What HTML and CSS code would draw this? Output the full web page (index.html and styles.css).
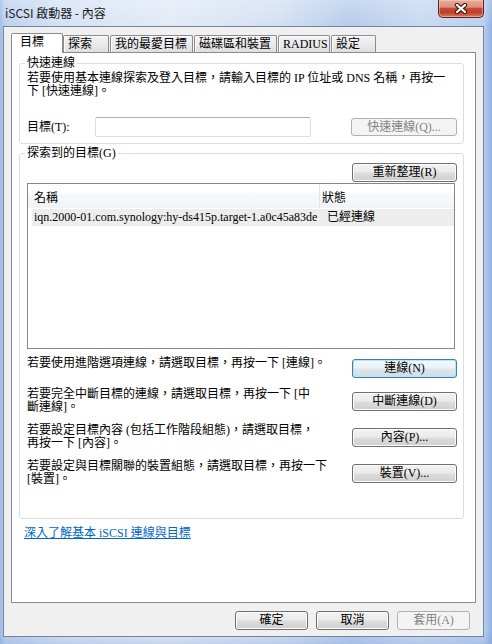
FILE: index.html
```html
<!DOCTYPE html>
<html lang="zh-Hant">
<head>
<meta charset="utf-8">
<title>iSCSI 啟動器 - 內容</title>
<link rel="stylesheet" href="styles.css">
</head>
<body>
<div class="window">
  <div class="titlebar">
    <span class="title">iSCSI 啟動器 - 內容</span>
    <div class="close">
      <svg width="14" height="11" viewBox="0 0 14 11"><path d="M3 2 L11 9 M11 2 L3 9" stroke="#4a1a12" stroke-width="4.4" stroke-linecap="round" fill="none"/><path d="M3 2 L11 9 M11 2 L3 9" stroke="#ffffff" stroke-width="2.3" stroke-linecap="round" fill="none"/></svg>
    </div>
  </div>
  <div class="client">
    <div class="tabs">
      <div class="tab active">目標</div>
      <div class="tab t2">探索</div>
      <div class="tab t3">我的最愛目標</div>
      <div class="tab t4">磁碟區和裝置</div>
      <div class="tab t5">RADIUS</div>
      <div class="tab t6">設定</div>
    </div>
    <div class="panel">
      <fieldset class="group g1">
        <legend>快速連線</legend>
        <p class="desc">若要使用基本連線探索及登入目標，請輸入目標的 IP 位址或 DNS 名稱，再按一<br>下 [快速連線]。</p>
        <div class="qrow">
          <span class="qlabel">目標(T):</span>
          <div class="input"></div>
          <button class="btn disabled quick">快速連線(Q)...</button>
        </div>
      </fieldset>
      <fieldset class="group g2">
        <legend>探索到的目標(G)</legend>
        <div class="refresh-row"><button class="btn side">重新整理(R)</button></div>
        <div class="list">
          <div class="lhead">
            <div class="hc1">名稱</div>
            <div class="hc2">狀態</div>
          </div>
          <div class="lrow">
            <div class="rc1">iqn.2000-01.com.synology:hy-ds415p.target-1.a0c45a83de</div>
            <div class="rc2">已經連線</div>
          </div>
        </div>
        <div class="acts">
          <div class="act first">
            <p class="atext">若要使用進階選項連線，請選取目標，再按一下 [連線]。</p>
            <button class="btn side focused">連線(N)</button>
          </div>
          <div class="act">
            <p class="atext">若要完全中斷目標的連線，請選取目標，再按一下 [中<br>斷連線]。</p>
            <button class="btn side">中斷連線(D)</button>
          </div>
          <div class="act">
            <p class="atext">若要設定目標內容 (包括工作階段組態)，請選取目標，<br>再按一下 [內容]。</p>
            <button class="btn side">內容(P)...</button>
          </div>
          <div class="act">
            <p class="atext">若要設定與目標關聯的裝置組態，請選取目標，再按一下<br>[裝置]。</p>
            <button class="btn side">裝置(V)...</button>
          </div>
        </div>
      </fieldset>
      <div class="linkrow"><a class="link" href="#">深入了解基本 iSCSI 連線與目標</a></div>
    </div>
    <div class="footer">
      <button class="btn foot">確定</button>
      <button class="btn foot">取消</button>
      <button class="btn foot disabled">套用(A)</button>
    </div>
  </div>
</div>
</body>
</html>
```
FILE: styles.css
```css
* { box-sizing: border-box; }
html, body { margin: 0; padding: 0; }
body {
  width: 492px;
  height: 644px;
  overflow: hidden;
  font-family: "Liberation Serif", "Noto Sans CJK TC", serif;
  font-size: 12px;
  line-height: 13px;
  color: #000;
  background: #ffffff;
}

.window {
  width: 492px;
  height: 644px;
  overflow: hidden;
  background:
    linear-gradient(180deg, rgba(255,255,255,0.25) 0px, rgba(255,255,255,0) 26px, rgba(255,255,255,0) 630px, rgba(120,150,210,0.25) 644px),
    linear-gradient(90deg, #9fbbe6 0px, #bcd1ef 5px, #d5e2f4 60px, #e2eaf6 170px, #d3e0f3 280px, #b6cceb 350px, #c9d9f1 420px, #b9cfee 484px, #8fb0e2 492px);
}

.titlebar {
  height: 26px;
  display: flex;
  align-items: flex-start;
  padding-left: 5px;
}
.title {
  font-family: "Noto Sans CJK TC", sans-serif;
  font-size: 12px;
  line-height: 25px;
  color: #1a1a1a;
}
.close {
  margin-left: auto;
  margin-right: 8px;
  width: 46px;
  height: 18px;
  border: 1px solid #5b2419;
  border-top: 0;
  border-radius: 0 0 5px 5px;
  background: linear-gradient(180deg, #e8ab9c 0%, #dc8f7c 42%, #c64b34 50%, #bf3e27 72%, #d6785c 100%);
  box-shadow: inset 0 0 0 1px rgba(255, 220, 210, 0.45);
  display: flex;
  align-items: center;
  justify-content: center;
  padding-bottom: 1px;
}
.close svg { display: block; }

.client {
  margin-left: 3px;
  width: 481px;
  height: 611px;
  border: 1px solid #75849a;
  background: #f0f0f0;
  padding: 6px 7px 0 7px;
  overflow: hidden;
}

.tabs {
  display: flex;
  align-items: flex-end;
  height: 19px;
}
.tab {
  height: 17px;
  border: 1px solid #898c95;
  border-bottom: 0;
  border-radius: 2px 2px 0 0;
  padding: 2px 0 0 4px;
  line-height: 13px;
  white-space: nowrap;
  background: linear-gradient(180deg, #f4f4f4 0%, #ebebeb 45%, #dedede 100%);
  box-shadow: inset 1px 1px 0 #fbfbfb;
  margin-left: 1px;
}
.tab.active {
  position: relative;
  z-index: 2;
  height: 20px;
  width: 52px;
  margin-bottom: -1px;
  margin-left: 0;
  padding-left: 8px;
  background: #ffffff;
  box-shadow: none;
}
.tab.t2 { width: 46px; margin-left: 0; }
.tab.t3 { width: 83px; }
.tab.t4 { width: 83px; }
.tab.t5 { width: 52px; }
.tab.t6 { width: 45px; }

.panel {
  width: 465px;
  height: 551px;
  border: 1px solid #898c95;
  background: #ffffff;
}

.group {
  margin: 4px 0 0 7px;
  width: 445px;
  min-width: 0;
  border: 1px solid #d5dfe5;
  border-radius: 3px;
  padding: 2px 6px 6px 7px;
}
.group legend {
  padding: 0 2px;
  margin-left: -2px;
  font-size: 12px;
  line-height: 13px;
}
.g2 {
  margin-top: 3px;
  padding: 3px 6px 22px 7px;
}

.desc, .atext {
  margin: 0;
  white-space: nowrap;
  line-height: 13px;
}

.qrow {
  margin-top: 19px;
  height: 20px;
  display: flex;
  align-items: center;
}
.qlabel {
  width: 68px;
  line-height: 13px;
}
.input {
  width: 216px;
  height: 20px;
  background: #ffffff;
  border: 1px solid #dbdfe6;
  border-top-color: #abadb3;
  border-radius: 2px;
}

.btn {
  display: block;
  height: 19px;
  padding: 0;
  border: 1px solid #707070;
  border-radius: 3px;
  background: linear-gradient(180deg, #f2f2f2 0%, #ebebeb 48%, #dddddd 52%, #cfcfcf 100%);
  box-shadow: inset 0 0 0 1px #fbfbfb;
  font-family: "Liberation Serif", "Noto Sans CJK TC", serif;
  font-size: 12px;
  line-height: 15px;
  color: #000;
  text-align: center;
  white-space: nowrap;
}
.btn.disabled {
  border-color: #adb2b5;
  background: #f4f4f4;
  box-shadow: none;
  color: #838383;
}
.btn.focused {
  border-color: #3c7fb1;
  box-shadow: inset 0 0 0 1px #b9e3f9;
  background: linear-gradient(180deg, #f4f9fc 0%, #eaf3f8 48%, #dde6ec 52%, #d1dce3 100%);
}
.btn.quick {
  margin-left: auto;
  width: 106px;
  height: 18px;
}
.btn.side { width: 105px; }
.btn.foot { width: 73px; }

.refresh-row {
  display: flex;
  justify-content: flex-end;
}

.list {
  margin-top: 1px;
  width: 428px;
  height: 166px;
  border: 1px solid #828790;
  background: #ffffff;
}
.lhead {
  display: flex;
  height: 24px;
  background: linear-gradient(180deg, #ffffff 0%, #ffffff 30%, #f7f8f9 45%, #f2f3f5 100%);
  line-height: 13px;
}
.hc1 {
  width: 292px;
  padding: 8px 0 0 6px;
  border-right: 1px solid #e3e4e6;
}
.hc2 {
  padding: 8px 0 0 2px;
}
.lrow {
  display: flex;
  margin: 1px 0 0 4px;
  height: 17px;
  background: #ededed;
  line-height: 17px;
  white-space: nowrap;
}
.rc1 {
  width: 295px;
  padding-left: 2px;
}

.acts {
  margin-top: 8px;
}
.act {
  display: flex;
  justify-content: space-between;
  align-items: flex-start;
  height: 36px;
}
.act .btn { margin-top: 4px; }
.act.first { height: 31px; }
.act.first .btn { margin-top: 2px; }

.linkrow {
  margin: 8px 0 0 12px;
  line-height: 13px;
}
.link {
  color: #0066cc;
  text-decoration: underline;
}

.footer {
  display: flex;
  justify-content: flex-end;
  gap: 8px;
  margin-top: 8px;
  padding-right: 6px;
}
```
